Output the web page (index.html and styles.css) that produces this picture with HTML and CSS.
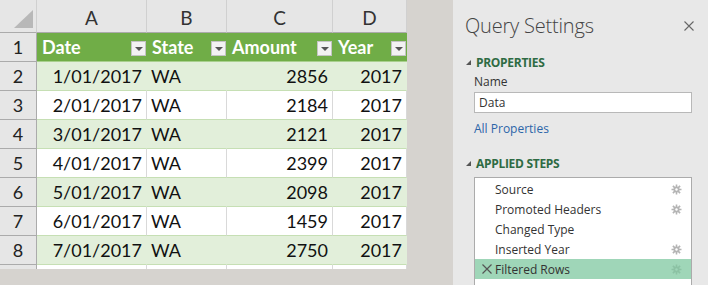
FILE: index.html
```html
<!DOCTYPE html>
<html>
<head>
<meta charset="utf-8">
<link rel="stylesheet" href="styles.css">
</head>
<body>
<div class="page">
  <div class="sheet">
    <div class="grid">
      <div class="corner"><span class="tri"></span></div>
      <div class="colh">A</div>
      <div class="colh">B</div>
      <div class="colh">C</div>
      <div class="colh last">D</div>

      <div class="rowh">1</div>
      <div class="th">Date<span class="dd"></span></div>
      <div class="th">State<span class="dd"></span></div>
      <div class="th">Amount<span class="dd"></span></div>
      <div class="th">Year<span class="dd"></span></div>

      <div class="rowh">2</div>
      <div class="td num band">1/01/2017</div><div class="td band">WA</div><div class="td num band">2856</div><div class="td num band">2017</div>
      <div class="rowh">3</div>
      <div class="td num">2/01/2017</div><div class="td">WA</div><div class="td num">2184</div><div class="td num">2017</div>
      <div class="rowh">4</div>
      <div class="td num band">3/01/2017</div><div class="td band">WA</div><div class="td num band">2121</div><div class="td num band">2017</div>
      <div class="rowh">5</div>
      <div class="td num">4/01/2017</div><div class="td">WA</div><div class="td num">2399</div><div class="td num">2017</div>
      <div class="rowh">6</div>
      <div class="td num band">5/01/2017</div><div class="td band">WA</div><div class="td num band">2098</div><div class="td num band">2017</div>
      <div class="rowh">7</div>
      <div class="td num">6/01/2017</div><div class="td">WA</div><div class="td num">1459</div><div class="td num">2017</div>
      <div class="rowh">8</div>
      <div class="td num band">7/01/2017</div><div class="td band">WA</div><div class="td num band">2750</div><div class="td num band">2017</div>
      <div class="rowh part"></div>
      <div class="td part"></div><div class="td part"></div><div class="td part"></div><div class="td part"></div>
    </div>
  </div>

  <aside class="panel">
    <div class="ptitle">
      <span>Query Settings</span>
      <svg class="close" width="10" height="10" viewBox="0 0 10 10"><path d="M0.5 0.5L9.5 9.5M9.5 0.5L0.5 9.5" stroke="#666" stroke-width="1.1" fill="none"/></svg>
    </div>
    <div class="sec">
      <span class="caret"></span><span class="sech">PROPERTIES</span>
    </div>
    <div class="field">
      <div class="lbl">Name</div>
      <div class="input">Data</div>
      <div class="link">All Properties</div>
    </div>
    <div class="sec sec2">
      <span class="caret"></span><span class="sech">APPLIED STEPS</span>
    </div>
    <div class="steps">
      <div class="step"><span class="x"></span><span class="sname">Source</span><svg class="gear" width="11" height="11" viewBox="0 0 11 11"><path d="M5.5 0.5V10.5M0.5 5.5H10.5M1.9 1.9L9.1 9.1M9.1 1.9L1.9 9.1" stroke="currentColor" stroke-width="1.6"/><circle cx="5.5" cy="5.5" r="3" fill="currentColor"/><circle cx="5.5" cy="5.5" r="1.2" fill="#fff"/></svg></div>
      <div class="step"><span class="x"></span><span class="sname">Promoted Headers</span><svg class="gear" width="11" height="11" viewBox="0 0 11 11"><path d="M5.5 0.5V10.5M0.5 5.5H10.5M1.9 1.9L9.1 9.1M9.1 1.9L1.9 9.1" stroke="currentColor" stroke-width="1.6"/><circle cx="5.5" cy="5.5" r="3" fill="currentColor"/><circle cx="5.5" cy="5.5" r="1.2" fill="#fff"/></svg></div>
      <div class="step"><span class="x"></span><span class="sname">Changed Type</span></div>
      <div class="step"><span class="x"></span><span class="sname">Inserted Year</span><svg class="gear" width="11" height="11" viewBox="0 0 11 11"><path d="M5.5 0.5V10.5M0.5 5.5H10.5M1.9 1.9L9.1 9.1M9.1 1.9L1.9 9.1" stroke="currentColor" stroke-width="1.6"/><circle cx="5.5" cy="5.5" r="3" fill="currentColor"/><circle cx="5.5" cy="5.5" r="1.2" fill="#fff"/></svg></div>
      <div class="step sel"><span class="x"><svg width="10" height="10" viewBox="0 0 10 10"><path d="M0.5 0.5L9.5 9.5M9.5 0.5L0.5 9.5" stroke="#555" stroke-width="1.2" fill="none"/></svg></span><span class="sname">Filtered Rows</span><svg class="gear" width="11" height="11" viewBox="0 0 11 11"><path d="M5.5 0.5V10.5M0.5 5.5H10.5M1.9 1.9L9.1 9.1M9.1 1.9L1.9 9.1" stroke="currentColor" stroke-width="1.6"/><circle cx="5.5" cy="5.5" r="3" fill="currentColor"/><circle cx="5.5" cy="5.5" r="1.2" fill="#9fd6b8"/></svg></div>
    </div>
  </aside>
</div>
</body>
</html>
```
FILE: styles.css
```css
* { box-sizing: border-box; }
html, body { margin: 0; padding: 0; }
body { width: 708px; height: 285px; overflow: hidden; background: #d6d3cf; }

.page { display: flex; height: 285px; }

.sheet { width: 407px; flex: none; }

.grid {
  display: grid;
  grid-template-columns: 37px 110px 80px 106px 74px;
  grid-template-rows: 33px repeat(8, 29px) 4px;
  font-family: Lato, "Open Sans", sans-serif;
  font-size: 18px;
  color: #111;
}

.corner {
  background: #e6e6e6;
  border-bottom: 1px solid #ababab;
  border-right: 1px solid #d0d0d0;
  position: relative;
}
.tri {
  position: absolute;
  right: 3px; bottom: 4px;
  width: 0; height: 0;
  border-left: 19px solid transparent;
  border-bottom: 18px solid #b8b8b8;
}
.colh {
  background: #e6e6e6;
  border-bottom: 1px solid #ababab;
  border-right: 1px solid #d0d0d0;
  display: flex; align-items: center; justify-content: center;
  color: #333;
  font-size: 19px;
  padding-top: 2px;
}

.rowh {
  background: #e6e6e6;
  border-bottom: 1px solid #ababab;
  border-right: 1px solid #ababab;
  display: flex; align-items: center; justify-content: center;
  color: #222;
  font-size: 18px;
}
.rowh.part { border-bottom: none; }

.th {
  background: #70ad47;
  color: #fff;
  font-weight: bold;
  display: flex; align-items: center; justify-content: space-between;
  padding: 0 1px 0 5px;
  border-bottom: 1px solid #a9d08e;
}
.dd {
  width: 15px; height: 15px;
  background: #f2f2f2;
  border: 1px solid #c4c4c4;
  position: relative;
  margin-top: 2px;
}
.dd::after {
  content: "";
  position: absolute;
  left: 3px; top: 5px;
  border-left: 4px solid transparent;
  border-right: 4px solid transparent;
  border-top: 4px solid #555;
}

.td {
  background: #fff;
  border-bottom: 1px solid #c6dfb4;
  border-right: 1px solid #d9d9d9;
  display: flex; align-items: center;
  padding: 0 4px;
  white-space: nowrap;
}
.td.band { background: #e2efda; border-right-color: #e2efda; }
.td.num { justify-content: flex-end; }
.td.part { border-bottom: none; }

/* panel */
.panel {
  margin-left: 46px;
  flex: 1;
  background: #e8e8e8;
  font-family: "Open Sans", "Noto Sans", sans-serif;
  color: #333;
  padding: 11px 0 0 12px;
  display: flex;
  flex-direction: column;
  overflow: hidden;
}
.ptitle {
  display: flex; align-items: center; justify-content: space-between;
  font-size: 20px;
  font-weight: 300;
  color: #444;
  height: 28px;
  padding-right: 14px;
  letter-spacing: -0.2px;
  flex: none;
}
.close { margin-top: 2px; }

.sec { display: flex; align-items: center; height: 18px; margin-top: 14px; flex: none; }
.sec2 { margin-top: 16px; }
.caret {
  width: 0; height: 0;
  border-left: 5px solid transparent;
  border-bottom: 5px solid #555;
  margin: 0 5px 0 1px;
}
.sech {
  font-size: 12px; font-weight: bold; color: #2e6b43;
  letter-spacing: -0.3px;
}
.field { padding-left: 9px; padding-right: 16px; flex: none; }
.lbl { font-size: 12px; height: 18px; line-height: 18px; margin-top: 2px; }
.input {
  background: #fff;
  border: 1px solid #b8b8b8;
  height: 21px;
  font-size: 12px;
  line-height: 19px;
  padding-left: 4px;
  margin-top: 1px;
}
.link { color: #2c65a8; font-size: 12px; height: 18px; line-height: 18px; margin-top: 7px; }

.steps {
  flex: 1;
  margin: 5px 16px 0 9px;
  background: #fff;
  border: 1px solid #ababab;
  border-bottom: none;
  padding-top: 1px;
}
.step {
  display: flex; align-items: center;
  height: 20px;
  font-size: 12px;
  color: #333;
  padding-right: 9px;
}
.step.sel { background: #9fd6b8; }
.x { width: 20px; flex: none; display: flex; justify-content: center; padding-left: 3px; }
.x svg { display: block; }
.sname { flex: 1; }
.gear { color: #b4b4b4; flex: none; }
.step.sel .gear { color: #8cc2a4; }
```
